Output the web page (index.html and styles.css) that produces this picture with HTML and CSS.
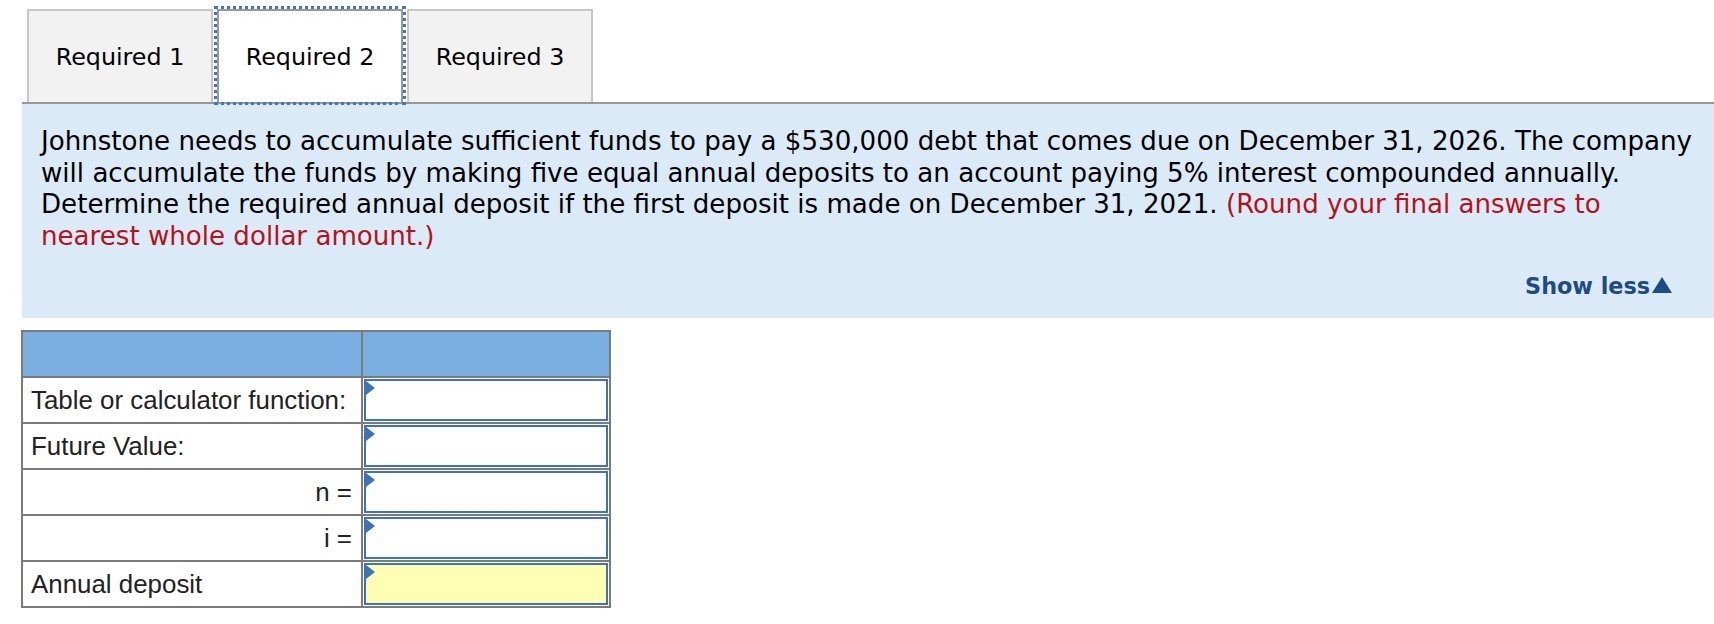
FILE: index.html
```html
<!DOCTYPE html>
<html lang="en">
<head>
    <meta charset="UTF-8">
    <title>Required 2</title>
    <link rel="stylesheet" href="styles.css">
</head>
<body>
    <div class="tabs">
        <div class="tab">Required 1</div>
        <div class="tab active">Required 2</div>
        <div class="tab">Required 3</div>
    </div>

    <!-- question text -->
    <div class="question">
        <p class="question-text">
            Johnstone needs to accumulate sufficient funds to pay a $530,000 debt that comes due on December 31, 2026. The company will accumulate the funds by making five equal annual deposits to an account paying 5% interest compounded annually. Determine the required annual deposit if the first deposit is made on December 31, 2021. <span class="note">(Round your final answers to nearest whole dollar amount.)</span>
        </p>
        <div class="show-less">
            Show less<svg class="arrow" width="20" height="16" viewBox="0 0 20 16"><polygon points="10,0 20,16 0,16" fill="#1d4b86"/></svg>
        </div>
    </div>

    <!-- answer table -->
    <table class="answer-table">
        <tr class="head-row">
            <th class="label-col"></th>
            <th class="input-col"></th>
        </tr>
        <tr>
            <td>Table or calculator function:</td>
            <td class="input-cell"><div class="answer-box"></div></td>
        </tr>
        <tr>
            <td>Future Value:</td>
            <td class="input-cell"><div class="answer-box"></div></td>
        </tr>
        <tr>
            <td class="right">n =</td>
            <td class="input-cell"><div class="answer-box"></div></td>
        </tr>
        <tr>
            <td class="right">i =</td>
            <td class="input-cell"><div class="answer-box"></div></td>
        </tr>
        <tr>
            <td>Annual deposit</td>
            <td class="input-cell"><div class="answer-box result"></div></td>
        </tr>
    </table>
</body>
</html>
```

FILE: styles.css
```css
* {
    margin: 0;
    padding: 0;
    box-sizing: border-box;
}

body {
    font-family: 'DejaVu Sans', Verdana, sans-serif;
    background: #fff;
    color: #000;
}

.tabs {
    display: flex;
    gap: 4px;
    margin-left: 22px;
    padding: 9px 0 0 5px;
    border-bottom: 2px solid #999;
}

.tab {
    width: 186px;
    height: 93px;
    display: flex;
    justify-content: center;
    align-items: center;
    background: #f2f2f2;
    border: 2px solid #c8c8c8;
    border-bottom: none;
    font-size: 23.8px;
}

.tab.active {
    background: #fff;
    border-color: #999;
    outline: 3px dotted #3b78c9;
}

.question {
    margin-left: 22px;
    background: #dbeaf7;
    padding: 22px 19px 17px 19px;
}

.question-text {
    font-size: 26.1px;
    line-height: 31.5px;
}

.note {
    color: #b5121b;
}

.show-less {
    margin-top: 19px;
    margin-right: 23px;
    display: flex;
    justify-content: flex-end;
    align-items: center;
    height: 30px;
    font-size: 22.3px;
    font-weight: bold;
    color: #1d4b86;
}

.arrow {
    margin-left: 2px;
    margin-bottom: 3px;
}

.answer-table {
    margin: 12px 0 0 21px;
    border-collapse: collapse;
    font-family: 'Liberation Sans', Arial, sans-serif;
    font-size: 25.9px;
    color: #222;
}

.answer-table th,
.answer-table td {
    border: 2px solid #7b7b7b;
    height: 46px;
    padding: 0 8px;
    text-align: left;
    font-weight: normal;
}

.head-row th {
    background: #7aaee1;
}

.label-col {
    width: 340px;
}

.input-col {
    width: 248px;
}

.answer-table td.right {
    text-align: right;
    padding-right: 9px;
}

.answer-table td.input-cell {
    padding: 1px;
}

.answer-box {
    position: relative;
    height: 42px;
    background: #fff;
    border: 2px solid #3d74b7;
}

.answer-box::before {
    content: "";
    position: absolute;
    top: 0;
    left: 0;
    border-left: 9px solid #3d74b7;
    border-top: 7px solid transparent;
    border-bottom: 7px solid transparent;
}

.answer-box.result {
    background: #ffffb3;
}
```
